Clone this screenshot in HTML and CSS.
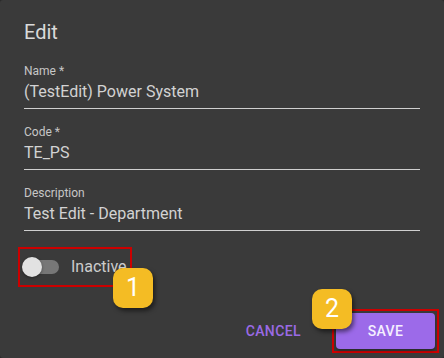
FILE: index.html
```html
<!DOCTYPE html>
<html lang="en">
<head>
    <meta charset="UTF-8">
    <meta name="viewport" content="width=device-width, initial-scale=1.0">
    <title>Edit</title>
    <link rel="stylesheet" href="styles.css">
</head>
<body>
    <div class="dialog">
        <div class="content">
            <h2 class="title">Edit</h2>

            <div class="field">
                <label class="field-label">Name *</label>
                <div class="field-value">(TestEdit) Power System</div>
            </div>

            <div class="field">
                <label class="field-label">Code *</label>
                <div class="field-value">TE_PS</div>
            </div>

            <div class="field">
                <label class="field-label">Description</label>
                <div class="field-value">Test Edit - Department</div>
            </div>

            <div class="toggle-row marked">
                <span class="switch">
                    <span class="switch-track"></span>
                    <span class="switch-thumb"></span>
                </span>
                <span class="toggle-label">Inactive</span>
                <span class="badge badge-one">1</span>
            </div>
        </div>

        <div class="actions">
            <button class="btn btn-text">Cancel</button>
            <div class="save-wrap marked">
                <button class="btn btn-primary">Save</button>
                <span class="badge badge-two">2</span>
            </div>
        </div>
    </div>
</body>
</html>
```

FILE: styles.css
```css
* {
    margin: 0;
    padding: 0;
    box-sizing: border-box;
}

html, body {
    width: 100%;
    height: 100%;
    background: #2b2b2b;
    font-family: Roboto, "Noto Sans", Arial, sans-serif;
}

.dialog {
    width: 444px;
    height: 358px;
    background: #3a3a3a;
    border-radius: 3px;
    color: rgba(255, 255, 255, 0.75);
}

.content {
    padding: 16px 24px 0 24px;
}

.title {
    font-size: 20px;
    font-weight: 400;
    line-height: 32px;
    color: rgba(255, 255, 255, 0.82);
}

.field {
    margin-top: 15px;
    border-bottom: 1px solid #cfcfcf;
    padding-bottom: 4px;
}

.field-label {
    display: block;
    font-size: 12px;
    line-height: 16px;
    color: rgba(255, 255, 255, 0.72);
}

.field-value {
    margin-top: 1px;
    font-size: 16px;
    line-height: 24px;
    color: rgba(255, 255, 255, 0.78);
}

.marked {
    border: 2px solid #cc0000;
}

/* toggle */
.toggle-row {
    position: relative;
    display: inline-flex;
    align-items: center;
    height: 40px;
    margin-top: 16px;
    margin-left: -6px;
    padding: 0 3px 0 2px;
}

.switch {
    position: relative;
    width: 37px;
    height: 20px;
}

.switch-track {
    position: absolute;
    left: 3px;
    top: 3px;
    width: 34px;
    height: 14px;
    border-radius: 7px;
    background: #777777;
}

.switch-thumb {
    position: absolute;
    left: 0;
    top: 0;
    width: 20px;
    height: 20px;
    border-radius: 50%;
    background: #e2e2e2;
    box-shadow: 0 1px 3px rgba(0, 0, 0, 0.4);
}

.toggle-label {
    margin-left: 12px;
    font-size: 16px;
    line-height: 24px;
    color: rgba(255, 255, 255, 0.75);
}

/* actions */
.actions {
    display: flex;
    justify-content: flex-end;
    align-items: center;
    margin-top: 22px;
    padding-right: 5px;
    gap: 23px;
}

.btn {
    border: none;
    font-family: inherit;
    font-size: 14px;
    font-weight: 500;
    letter-spacing: 0.4px;
    text-transform: uppercase;
    cursor: pointer;
}

.btn-text {
    background: none;
    color: #9a6ae6;
    padding: 6px 8px;
    line-height: 24px;
}

.save-wrap {
    position: relative;
    padding: 2px;
}

.btn-primary {
    display: block;
    width: 99px;
    height: 36px;
    border-radius: 4px;
    background: #9c6ae9;
    color: #f4efff;
    box-shadow: 0 2px 3px rgba(0, 0, 0, 0.3);
}

/* numbered callouts */
.badge {
    position: absolute;
    width: 40px;
    height: 40px;
    border-radius: 10px;
    background: #f4bc24;
    color: #ffffff;
    font-size: 25px;
    line-height: 40px;
    text-align: center;
    box-shadow: 2px 3px 4px rgba(0, 0, 0, 0.5);
}

.badge-one {
    left: 93px;
    top: 19px;
}

.badge-two {
    left: -22px;
    top: -22px;
}
```
